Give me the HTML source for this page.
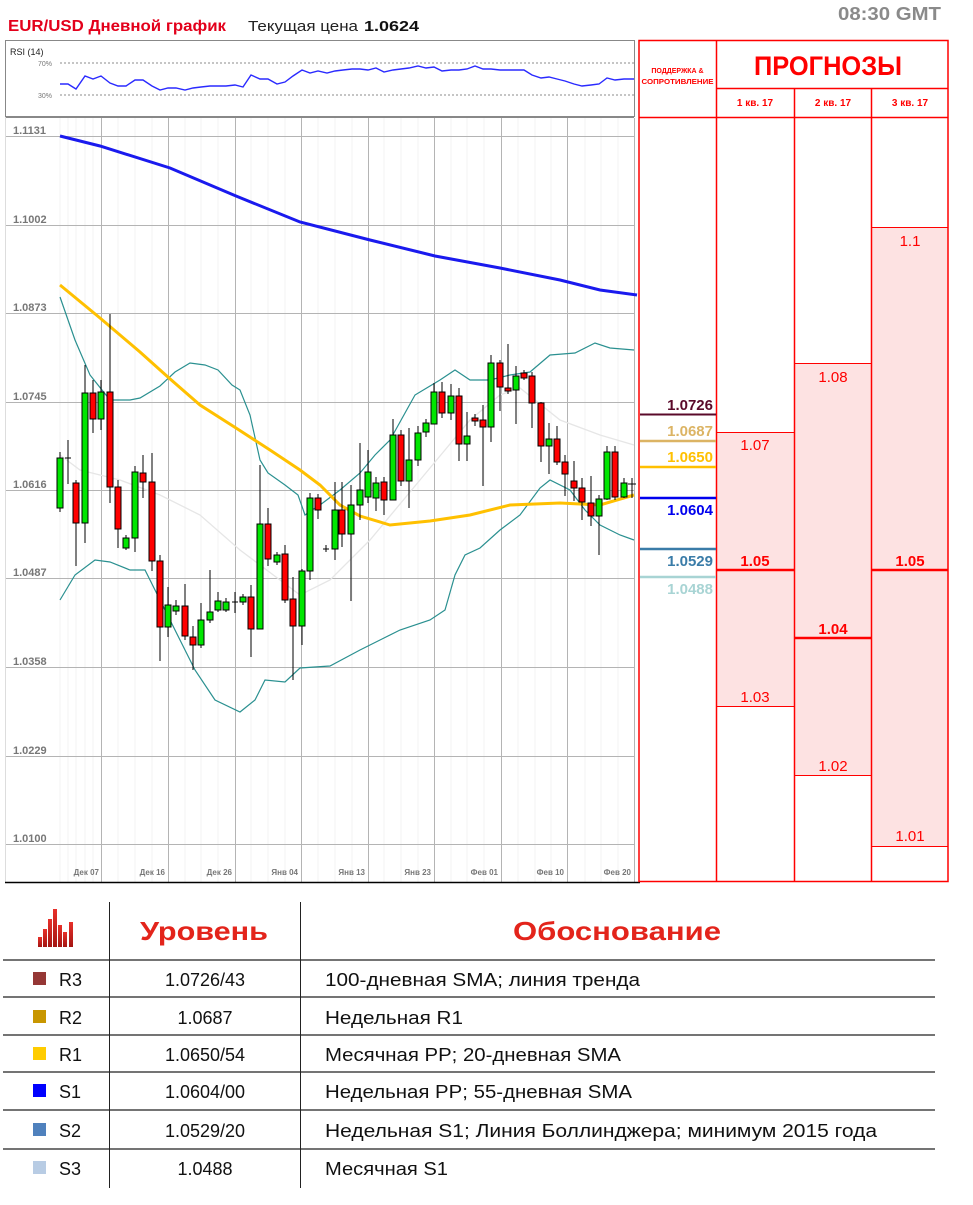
<!DOCTYPE html>
<html><head><meta charset="utf-8"><style>
html,body{margin:0;padding:0;background:#fff;}
svg{display:block;font-family:"Liberation Sans",sans-serif;}
</style></head><body>
<svg width="973" height="1205" viewBox="0 0 973 1205" xmlns="http://www.w3.org/2000/svg">
<defs>
<linearGradient id="bar" x1="0" y1="0" x2="0" y2="1"><stop offset="0" stop-color="#e8302a"/><stop offset="1" stop-color="#a31512"/></linearGradient>
</defs>
<text x="8" y="31" font-size="15.5" font-weight="bold" fill="#e3001b" textLength="218" lengthAdjust="spacingAndGlyphs">EUR/USD Дневной график</text>
<text x="248" y="31" font-size="15" fill="#222" textLength="110" lengthAdjust="spacingAndGlyphs">Текущая цена</text>
<text x="364" y="31" font-size="15" font-weight="bold" fill="#111" textLength="55" lengthAdjust="spacingAndGlyphs">1.0624</text>
<text x="838" y="20" font-size="18" font-weight="bold" fill="#8a8a8a" textLength="103" lengthAdjust="spacingAndGlyphs">08:30 GMT</text>

<rect x="5.5" y="40.5" width="629" height="76" fill="#fff" stroke="#888"/>
<text x="10" y="55" font-size="9" fill="#222">RSI (14)</text>
<text x="38" y="66" font-size="7" fill="#777">70%</text>
<text x="38" y="98" font-size="7" fill="#777">30%</text>
<line x1="60" y1="63" x2="634" y2="63" stroke="#666" stroke-dasharray="2,2" stroke-width="0.8"/>
<line x1="60" y1="95" x2="634" y2="95" stroke="#666" stroke-dasharray="2,2" stroke-width="0.8"/>
<polyline fill="none" stroke="#2a2aff" stroke-width="1.4" points="60,84 68,84 76,89 85,76 93,79 101,76 110,83 118,86 126,86 135,80 143,80 152,86 160,90 168,88 176,88 185,90 193,88 201,87 210,86 218,86 226,86 235,85 243,87 251,75 260,79 268,79 277,84 285,82 293,76 302,70 310,73 318,71 327,73 335,71 343,70 352,69 360,69 368,70 376,68 384,72 393,70 401,69 409,68 418,66 426,68 434,67 442,71 451,70 459,70 467,69 475,66 483,69 491,69 500,70 508,70 516,70 524,70 532,75 541,78 549,77 557,79 565,81 574,84 582,86 591,85 599,84 607,78 615,80 624,79 634,79"/>

<line x1="5" y1="117.5" x2="634" y2="117.5" stroke="#888"/>
<line x1="5.5" y1="117" x2="5.5" y2="882" stroke="#ddd"/>
<g stroke="#f3f3f3" stroke-width="1">
<line x1="60" y1="118" x2="60" y2="882"/><line x1="68" y1="118" x2="68" y2="882"/><line x1="76" y1="118" x2="76" y2="882"/><line x1="85" y1="118" x2="85" y2="882"/><line x1="93" y1="118" x2="93" y2="882"/>
<line x1="118" y1="118" x2="118" y2="882"/><line x1="135" y1="118" x2="135" y2="882"/><line x1="152" y1="118" x2="152" y2="882"/>
<line x1="185" y1="118" x2="185" y2="882"/><line x1="201" y1="118" x2="201" y2="882"/><line x1="218" y1="118" x2="218" y2="882"/>
<line x1="251" y1="118" x2="251" y2="882"/><line x1="268" y1="118" x2="268" y2="882"/><line x1="285" y1="118" x2="285" y2="882"/>
<line x1="318" y1="118" x2="318" y2="882"/><line x1="335" y1="118" x2="335" y2="882"/><line x1="352" y1="118" x2="352" y2="882"/>
<line x1="384" y1="118" x2="384" y2="882"/><line x1="401" y1="118" x2="401" y2="882"/><line x1="418" y1="118" x2="418" y2="882"/>
<line x1="451" y1="118" x2="451" y2="882"/><line x1="467" y1="118" x2="467" y2="882"/><line x1="484" y1="118" x2="484" y2="882"/>
<line x1="518" y1="118" x2="518" y2="882"/><line x1="535" y1="118" x2="535" y2="882"/><line x1="551" y1="118" x2="551" y2="882"/>
<line x1="585" y1="118" x2="585" y2="882"/><line x1="601" y1="118" x2="601" y2="882"/><line x1="618" y1="118" x2="618" y2="882"/>
</g>
<g stroke="#b4b4b4" stroke-width="1">
<line x1="6" y1="136.5" x2="634" y2="136.5"/><line x1="6" y1="225.5" x2="634" y2="225.5"/><line x1="6" y1="313.5" x2="634" y2="313.5"/><line x1="6" y1="402.5" x2="634" y2="402.5"/><line x1="6" y1="490.5" x2="634" y2="490.5"/><line x1="6" y1="578.5" x2="634" y2="578.5"/><line x1="6" y1="667.5" x2="634" y2="667.5"/><line x1="6" y1="756.5" x2="634" y2="756.5"/><line x1="6" y1="844.5" x2="634" y2="844.5"/>
<line x1="101.5" y1="118" x2="101.5" y2="882"/><line x1="168.5" y1="118" x2="168.5" y2="882"/><line x1="235.5" y1="118" x2="235.5" y2="882"/><line x1="301.5" y1="118" x2="301.5" y2="882"/><line x1="368.5" y1="118" x2="368.5" y2="882"/><line x1="434.5" y1="118" x2="434.5" y2="882"/><line x1="501.5" y1="118" x2="501.5" y2="882"/><line x1="567.5" y1="118" x2="567.5" y2="882"/><line x1="634.5" y1="118" x2="634.5" y2="882"/>
</g>
<line x1="5" y1="882.5" x2="640" y2="882.5" stroke="#000" stroke-width="1.5"/>
<g font-size="11" font-weight="bold" fill="#777">
<text x="13" y="134">1.1131</text><text x="13" y="223">1.1002</text><text x="13" y="311">1.0873</text><text x="13" y="400">1.0745</text><text x="13" y="488">1.0616</text><text x="13" y="576">1.0487</text><text x="13" y="665">1.0358</text><text x="13" y="754">1.0229</text><text x="13" y="842">1.0100</text>
</g>
<g font-size="8" font-weight="bold" fill="#777" text-anchor="end">
<text x="99" y="875">Дек 07</text><text x="165" y="875">Дек 16</text><text x="232" y="875">Дек 26</text><text x="298" y="875">Янв 04</text><text x="365" y="875">Янв 13</text><text x="431" y="875">Янв 23</text><text x="498" y="875">Фев 01</text><text x="564" y="875">Фев 10</text><text x="631" y="875">Фев 20</text>
</g>

<polyline fill="none" stroke="#e6e6e6" stroke-width="1.3" points="60,455 80,470 120,480 160,495 200,515 240,550 280,580 300,595 330,580 370,540 420,480 470,420 500,395 520,388 560,420 600,435 634,445"/>
<polyline fill="none" stroke="#2a9090" stroke-width="1.2" points="60,297 75,340 90,375 110,400 130,400 140,398 160,386 175,372 190,363 205,365 218,370 232,385 240,390 250,415 260,460 268,473 285,485 298,495 305,515 312,510 320,505 340,490 360,473 375,455 390,440 415,395 440,380 455,370 470,380 490,380 510,375 530,372 550,355 575,353 595,343 610,348 634,350"/>
<polyline fill="none" stroke="#2a9090" stroke-width="1.2" points="60,600 75,575 95,560 110,562 130,570 145,570 155,590 175,630 195,670 215,700 240,712 255,700 265,680 285,682 300,668 330,666 360,650 380,640 400,630 430,620 445,610 455,575 465,555 480,548 500,530 520,515 540,488 550,480 570,490 585,510 600,525 620,535 634,540"/>
<polyline fill="none" stroke="#ffc000" stroke-width="3" points="60,285 100,318 140,352 169,378 200,405 236,428 270,450 300,470 320,485 340,505 360,516 390,525 430,521 470,515 510,505 560,503 600,505 634,495"/>
<polyline fill="none" stroke="#1a1aee" stroke-width="3" points="60,136 100,146 170,168 236,196 300,222 370,240 435,256 500,268 560,280 600,290 637,295"/>

<g stroke="#000" stroke-width="1">
<line x1="60" y1="452" x2="60" y2="512"/><rect x="57" y="458" width="6" height="50" fill="#00e600"/>
<line x1="68" y1="440" x2="68" y2="484"/><line x1="65" y1="458" x2="71" y2="458"/>
<line x1="76" y1="480" x2="76" y2="566"/><rect x="73" y="483" width="6" height="40" fill="#f00"/>
<line x1="85" y1="365" x2="85" y2="543"/><rect x="82" y="393" width="6" height="130" fill="#00e600"/>
<line x1="93" y1="380" x2="93" y2="433"/><rect x="90" y="393" width="6" height="26" fill="#f00"/>
<line x1="101" y1="380" x2="101" y2="430"/><rect x="98" y="392" width="6" height="27" fill="#00e600"/>
<line x1="110" y1="314" x2="110" y2="503"/><rect x="107" y="392" width="6" height="95" fill="#f00"/>
<line x1="118" y1="480" x2="118" y2="548"/><rect x="115" y="487" width="6" height="42" fill="#f00"/>
<line x1="126" y1="535" x2="126" y2="550"/><rect x="123" y="538" width="6" height="10" fill="#00e600"/>
<line x1="135" y1="466" x2="135" y2="552"/><rect x="132" y="472" width="6" height="66" fill="#00e600"/>
<line x1="143" y1="455" x2="143" y2="498"/><rect x="140" y="473" width="6" height="9" fill="#f00"/>
<line x1="152" y1="453" x2="152" y2="571"/><rect x="149" y="482" width="6" height="79" fill="#f00"/>
<line x1="160" y1="555" x2="160" y2="661"/><rect x="157" y="561" width="6" height="66" fill="#f00"/>
<line x1="168" y1="587" x2="168" y2="637"/><rect x="165" y="605" width="6" height="22" fill="#00e600"/>
<line x1="176" y1="600" x2="176" y2="615"/><rect x="173" y="606" width="6" height="5" fill="#00e600"/>
<line x1="185" y1="584" x2="185" y2="640"/><rect x="182" y="606" width="6" height="30" fill="#f00"/>
<line x1="193" y1="626" x2="193" y2="670"/><rect x="190" y="637" width="6" height="8" fill="#f00"/>
<line x1="201" y1="603" x2="201" y2="648"/><rect x="198" y="620" width="6" height="25" fill="#00e600"/>
<line x1="210" y1="570" x2="210" y2="623"/><rect x="207" y="612" width="6" height="8" fill="#00e600"/>
<line x1="218" y1="592" x2="218" y2="612"/><rect x="215" y="601" width="6" height="9" fill="#00e600"/>
<line x1="226" y1="598" x2="226" y2="612"/><rect x="223" y="602" width="6" height="8" fill="#00e600"/>
<line x1="235" y1="592" x2="235" y2="613"/><line x1="232" y1="602" x2="238" y2="602"/>
<line x1="243" y1="594" x2="243" y2="605"/><rect x="240" y="597" width="6" height="5" fill="#00e600"/>
<line x1="251" y1="585" x2="251" y2="657"/><rect x="248" y="597" width="6" height="32" fill="#f00"/>
<line x1="260" y1="465" x2="260" y2="629"/><rect x="257" y="524" width="6" height="105" fill="#00e600"/>
<line x1="268" y1="508" x2="268" y2="566"/><rect x="265" y="524" width="6" height="35" fill="#f00"/>
<line x1="277" y1="552" x2="277" y2="565"/><rect x="274" y="555" width="6" height="7" fill="#00e600"/>
<line x1="285" y1="545" x2="285" y2="603"/><rect x="282" y="554" width="6" height="46" fill="#f00"/>
<line x1="293" y1="577" x2="293" y2="680"/><rect x="290" y="599" width="6" height="27" fill="#f00"/>
<line x1="302" y1="569" x2="302" y2="645"/><rect x="299" y="571" width="6" height="55" fill="#00e600"/>
<line x1="310" y1="493" x2="310" y2="580"/><rect x="307" y="498" width="6" height="73" fill="#00e600"/>
<line x1="318" y1="494" x2="318" y2="519"/><rect x="315" y="498" width="6" height="12" fill="#f00"/>
<line x1="326" y1="545" x2="326" y2="552"/><line x1="323" y1="549" x2="329" y2="549"/>
<line x1="335" y1="482" x2="335" y2="560"/><rect x="332" y="510" width="6" height="39" fill="#00e600"/>
<line x1="342" y1="482" x2="342" y2="547"/><rect x="339" y="510" width="6" height="24" fill="#f00"/>
<line x1="351" y1="485" x2="351" y2="601"/><rect x="348" y="505" width="6" height="29" fill="#00e600"/>
<line x1="360" y1="443" x2="360" y2="520"/><rect x="357" y="490" width="6" height="15" fill="#00e600"/>
<line x1="368" y1="450" x2="368" y2="503"/><rect x="365" y="472" width="6" height="25" fill="#00e600"/>
<line x1="376" y1="477" x2="376" y2="511"/><rect x="373" y="483" width="6" height="15" fill="#00e600"/>
<line x1="384" y1="477" x2="384" y2="515"/><rect x="381" y="482" width="6" height="18" fill="#f00"/>
<line x1="393" y1="419" x2="393" y2="500"/><rect x="390" y="435" width="6" height="65" fill="#00e600"/>
<line x1="401" y1="430" x2="401" y2="486"/><rect x="398" y="435" width="6" height="46" fill="#f00"/>
<line x1="409" y1="428" x2="409" y2="508"/><rect x="406" y="460" width="6" height="21" fill="#00e600"/>
<line x1="418" y1="426" x2="418" y2="466"/><rect x="415" y="433" width="6" height="27" fill="#00e600"/>
<line x1="426" y1="419" x2="426" y2="437"/><rect x="423" y="423" width="6" height="9" fill="#00e600"/>
<line x1="434" y1="383" x2="434" y2="424"/><rect x="431" y="392" width="6" height="32" fill="#00e600"/>
<line x1="442" y1="382" x2="442" y2="418"/><rect x="439" y="392" width="6" height="21" fill="#f00"/>
<line x1="451" y1="384" x2="451" y2="420"/><rect x="448" y="396" width="6" height="17" fill="#00e600"/>
<line x1="459" y1="388" x2="459" y2="461"/><rect x="456" y="396" width="6" height="48" fill="#f00"/>
<line x1="467" y1="412" x2="467" y2="461"/><rect x="464" y="436" width="6" height="8" fill="#00e600"/>
<line x1="475" y1="414" x2="475" y2="426"/><rect x="472" y="418" width="6" height="3" fill="#f00"/>
<line x1="483" y1="405" x2="483" y2="486"/><rect x="480" y="420" width="6" height="7" fill="#f00"/>
<line x1="491" y1="355" x2="491" y2="442"/><rect x="488" y="363" width="6" height="64" fill="#00e600"/>
<line x1="500" y1="360" x2="500" y2="411"/><rect x="497" y="363" width="6" height="24" fill="#f00"/>
<line x1="508" y1="344" x2="508" y2="394"/><rect x="505" y="388" width="6" height="3" fill="#f00"/>
<line x1="516" y1="366" x2="516" y2="424"/><rect x="513" y="376" width="6" height="14" fill="#00e600"/>
<line x1="524" y1="370" x2="524" y2="380"/><rect x="521" y="373" width="6" height="5" fill="#f00"/>
<line x1="532" y1="372" x2="532" y2="428"/><rect x="529" y="376" width="6" height="27" fill="#f00"/>
<line x1="541" y1="402" x2="541" y2="462"/><rect x="538" y="403" width="6" height="43" fill="#f00"/>
<line x1="549" y1="423" x2="549" y2="474"/><rect x="546" y="439" width="6" height="7" fill="#00e600"/>
<line x1="557" y1="426" x2="557" y2="465"/><rect x="554" y="439" width="6" height="23" fill="#f00"/>
<line x1="565" y1="455" x2="565" y2="496"/><rect x="562" y="462" width="6" height="12" fill="#f00"/>
<line x1="574" y1="461" x2="574" y2="501"/><rect x="571" y="481" width="6" height="7" fill="#f00"/>
<line x1="582" y1="478" x2="582" y2="520"/><rect x="579" y="488" width="6" height="14" fill="#f00"/>
<line x1="591" y1="476" x2="591" y2="526"/><rect x="588" y="503" width="6" height="13" fill="#f00"/>
<line x1="599" y1="495" x2="599" y2="555"/><rect x="596" y="499" width="6" height="17" fill="#00e600"/>
<line x1="607" y1="446" x2="607" y2="500"/><rect x="604" y="452" width="6" height="47" fill="#00e600"/>
<line x1="615" y1="446" x2="615" y2="500"/><rect x="612" y="452" width="6" height="45" fill="#f00"/>
<line x1="624" y1="478" x2="624" y2="498"/><rect x="621" y="483" width="6" height="14" fill="#00e600"/>
<line x1="632" y1="478" x2="632" y2="498"/><line x1="628" y1="484" x2="636" y2="484"/>
</g>

<rect x="717" y="432" width="77" height="274" fill="#fde2e2"/>
<rect x="795" y="363" width="76" height="412" fill="#fde2e2"/>
<rect x="872" y="227" width="76" height="619" fill="#fde2e2"/>
<g stroke="#f00" stroke-width="1">
<line x1="717" y1="432.5" x2="794" y2="432.5"/><line x1="717" y1="706.5" x2="794" y2="706.5"/>
<line x1="795" y1="363.5" x2="871" y2="363.5"/><line x1="795" y1="775.5" x2="871" y2="775.5"/>
<line x1="872" y1="227.5" x2="948" y2="227.5"/><line x1="872" y1="846.5" x2="948" y2="846.5"/>
</g>
<g stroke="#f00" stroke-width="2.5">
<line x1="717" y1="570" x2="794" y2="570"/><line x1="795" y1="638" x2="871" y2="638"/><line x1="872" y1="570" x2="948" y2="570"/>
</g>
<g stroke="#f00" stroke-width="1.5" fill="none">
<rect x="639" y="40.5" width="309" height="841"/>
<line x1="716.5" y1="40" x2="716.5" y2="882"/>
<line x1="794.5" y1="88" x2="794.5" y2="882"/>
<line x1="871.5" y1="88" x2="871.5" y2="882"/>
<line x1="716" y1="88.5" x2="948" y2="88.5"/>
<line x1="639" y1="117.5" x2="948" y2="117.5"/>
</g>
<text x="677.5" y="73" font-size="7" font-weight="bold" fill="#f00" text-anchor="middle">ПОДДЕРЖКА &amp;</text>
<text x="677.5" y="84" font-size="7" font-weight="bold" fill="#f00" text-anchor="middle" textLength="72" lengthAdjust="spacingAndGlyphs">СОПРОТИВЛЕНИЕ</text>
<text x="828" y="75" font-size="27" font-weight="bold" fill="#f00" text-anchor="middle" textLength="148" lengthAdjust="spacingAndGlyphs">ПРОГНОЗЫ</text>
<g font-size="10" font-weight="bold" fill="#f00" text-anchor="middle">
<text x="755" y="106">1 кв. 17</text><text x="833" y="106">2 кв. 17</text><text x="910" y="106">3 кв. 17</text>
</g>
<g font-size="15" fill="#f00" text-anchor="middle">
<text x="755" y="450">1.07</text><text x="755" y="702">1.03</text>
<text x="833" y="382">1.08</text><text x="833" y="771">1.02</text>
<text x="910" y="246">1.1</text><text x="910" y="841">1.01</text>
</g>
<g font-size="15" font-weight="bold" fill="#f00" text-anchor="middle">
<text x="755" y="566">1.05</text><text x="833" y="634">1.04</text><text x="910" y="566">1.05</text>
</g>
<line x1="640" y1="414.5" x2="716" y2="414.5" stroke="#5a0a2a" stroke-width="2"/>
<line x1="640" y1="441" x2="716" y2="441" stroke="#dcb464" stroke-width="2.5"/>
<line x1="640" y1="467" x2="716" y2="467" stroke="#ffc000" stroke-width="2.5"/>
<line x1="640" y1="498" x2="716" y2="498" stroke="#0000ee" stroke-width="2.5"/>
<line x1="640" y1="549" x2="716" y2="549" stroke="#3a7ca8" stroke-width="2.5"/>
<line x1="640" y1="577" x2="716" y2="577" stroke="#a8d4d4" stroke-width="2.5"/>
<g font-size="15" font-weight="bold" text-anchor="end">
<text x="713" y="410" fill="#5a0a2a">1.0726</text>
<text x="713" y="436" fill="#dcb464">1.0687</text>
<text x="713" y="462" fill="#ffc000">1.0650</text>
<text x="713" y="515" fill="#0000ee">1.0604</text>
<text x="713" y="566" fill="#3a7ca8">1.0529</text>
<text x="713" y="594" fill="#a8d4d4">1.0488</text>
</g>

<g fill="url(#bar)">
<rect x="38" y="937" width="4" height="10"/><rect x="43" y="929" width="4" height="18"/><rect x="48" y="919" width="4" height="28"/><rect x="53" y="909" width="4" height="38"/><rect x="58" y="925" width="4" height="22"/><rect x="63" y="932" width="4" height="15"/><rect x="69" y="922" width="4" height="25"/>
</g>
<text x="204" y="940" font-size="26" font-weight="bold" fill="#e3241b" text-anchor="middle" textLength="128" lengthAdjust="spacingAndGlyphs">Уровень</text>
<text x="617" y="940" font-size="26" font-weight="bold" fill="#e3241b" text-anchor="middle" textLength="208" lengthAdjust="spacingAndGlyphs">Обоснование</text>
<g stroke="#222" stroke-width="1">
<line x1="109.5" y1="902" x2="109.5" y2="1188"/><line x1="300.5" y1="902" x2="300.5" y2="1188"/>
</g>
<g stroke="#222" stroke-width="1.3">
<line x1="3" y1="960" x2="935" y2="960"/><line x1="3" y1="997" x2="935" y2="997"/><line x1="3" y1="1035" x2="935" y2="1035"/><line x1="3" y1="1072" x2="935" y2="1072"/><line x1="3" y1="1110" x2="935" y2="1110"/><line x1="3" y1="1149" x2="935" y2="1149"/>
</g>
<rect x="33" y="972" width="13" height="13" fill="#953735"/>
<rect x="33" y="1010" width="13" height="13" fill="#c89600"/>
<rect x="33" y="1047" width="13" height="13" fill="#ffcc00"/>
<rect x="33" y="1084" width="13" height="13" fill="#0000ff"/>
<rect x="33" y="1123" width="13" height="13" fill="#4f81bd"/>
<rect x="33" y="1161" width="13" height="13" fill="#b8cce4"/>
<g font-size="18" fill="#111">
<text x="59" y="986">R3</text><text x="59" y="1024">R2</text><text x="59" y="1061">R1</text><text x="59" y="1098">S1</text><text x="59" y="1137">S2</text><text x="59" y="1175">S3</text>
</g>
<g font-size="18" fill="#111" text-anchor="middle">
<text x="205" y="986">1.0726/43</text><text x="205" y="1024">1.0687</text><text x="205" y="1061">1.0650/54</text><text x="205" y="1098">1.0604/00</text><text x="205" y="1137">1.0529/20</text><text x="205" y="1175">1.0488</text>
</g>
<g font-size="18" fill="#111">
<text x="325" y="986" textLength="315" lengthAdjust="spacingAndGlyphs">100-дневная SMA; линия тренда</text>
<text x="325" y="1024" textLength="138" lengthAdjust="spacingAndGlyphs">Недельная R1</text>
<text x="325" y="1061" textLength="296" lengthAdjust="spacingAndGlyphs">Месячная PP; 20-дневная SMA</text>
<text x="325" y="1098" textLength="307" lengthAdjust="spacingAndGlyphs">Недельная PP; 55-дневная SMA</text>
<text x="325" y="1137" textLength="552" lengthAdjust="spacingAndGlyphs">Недельная S1; Линия Боллинджера; минимум 2015 года</text>
<text x="325" y="1175" textLength="123" lengthAdjust="spacingAndGlyphs">Месячная S1</text>
</g>
</svg>
</body></html>
